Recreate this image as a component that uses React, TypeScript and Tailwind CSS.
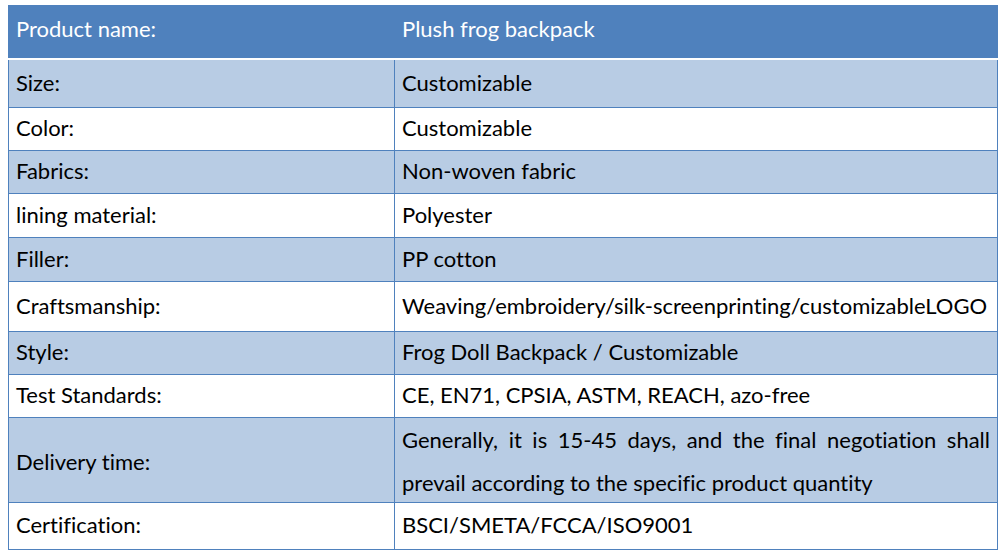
import React from "react";

type Row = { label: string; value: React.ReactNode; h: string; shade: boolean };

const rows: Row[] = [
    { label: "Size:", value: "Customizable", h: "h-[48px]", shade: true },
    { label: "Color:", value: "Customizable", h: "h-[43px]", shade: false },
    { label: "Fabrics:", value: "Non-woven fabric", h: "h-[43px]", shade: true },
    { label: "lining material:", value: "Polyester", h: "h-[44px]", shade: false },
    { label: "Filler:", value: "PP cotton", h: "h-[44px]", shade: true },
    {
        label: "Craftsmanship:",
        value: "Weaving/embroidery/silk-screenprinting/customizableLOGO",
        h: "h-[50px]",
        shade: false,
    },
    { label: "Style:", value: "Frog Doll Backpack / Customizable", h: "h-[43px]", shade: true },
    {
        label: "Test Standards:",
        value: "CE, EN71, CPSIA, ASTM, REACH, azo-free",
        h: "h-[43px]",
        shade: false,
    },
    {
        label: "Delivery time:",
        value: (
            <div className="flex flex-col leading-[43px]">
                <span className="text-justify [text-align-last:justify]">
                    Generally, it is 15-45 days, and the final negotiation shall
                </span>
                <span>prevail according to the specific product quantity</span>
            </div>
        ),
        h: "h-[85px]",
        shade: true,
    },
    { label: "Certification:", value: "BSCI/SMETA/FCCA/ISO9001", h: "h-[47px]", shade: false },
];

export default function App() {
    return (
        <div className="w-[1003px] h-[560px] bg-white pt-[5px] pl-[8px] font-['Lato','Liberation_Sans',sans-serif] text-[22px] text-black [font-variant-ligatures:none]">
            <div className="w-[990px]">
                {/* шапка */}
                <div className="grid grid-cols-[386px_1fr] h-[53px] bg-[#4f81bd] text-white items-center pb-[7px]">
                    <div className="pl-[8px]">Product name:</div>
                    <div className="pl-[8px]">Plush frog backpack</div>
                </div>
                <div className="h-[2px]" />
                <div className="border-x border-[#4f81bd]">
                    {rows.map((row) => (
                        <div
                            key={row.label}
                            className={`grid grid-cols-[385px_1fr] border-b border-[#4f81bd] ${row.h} ${
                                row.shade ? "bg-[#b8cce4]" : "bg-white"
                            }`}
                        >
                            <div className="flex items-center pl-[7px] pb-[3px]">{row.label}</div>
                            <div className="flex items-center border-l border-[#4f81bd] pl-[7px] pr-[7px] pb-[3px]">
                                <div className="w-full">{row.value}</div>
                            </div>
                        </div>
                    ))}
                </div>
            </div>
        </div>
    );
}
